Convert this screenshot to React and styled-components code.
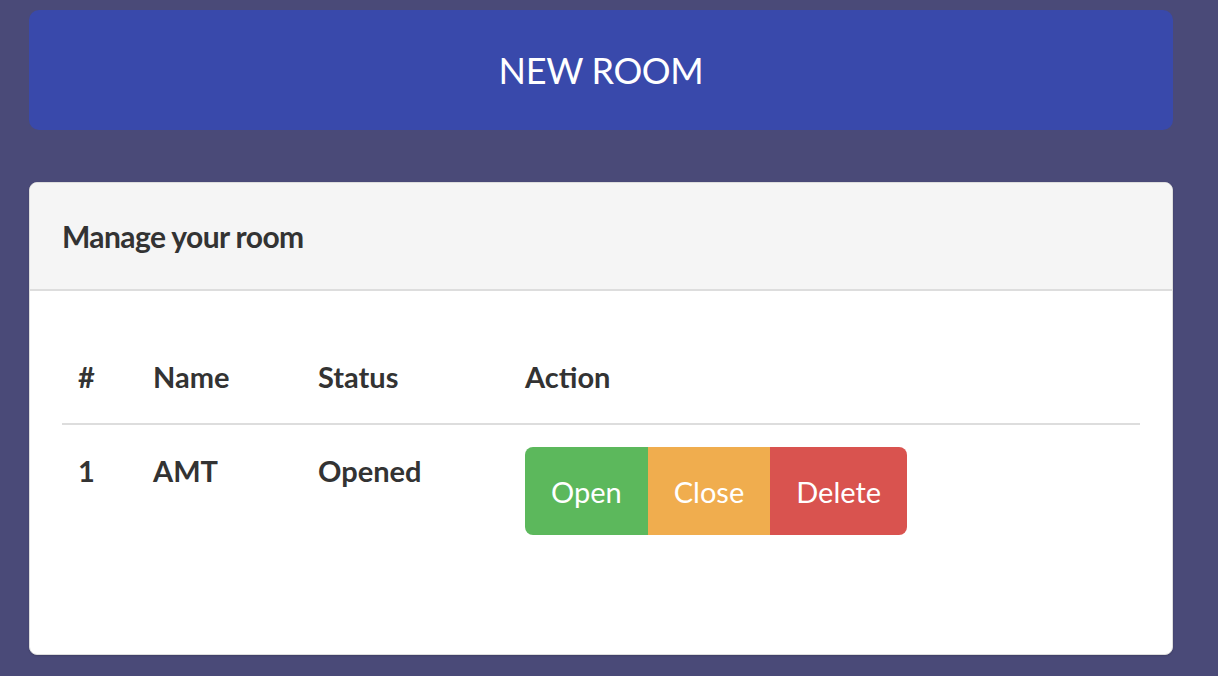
import styled, { createGlobalStyle } from "styled-components";

const GlobalStyle = createGlobalStyle`
  html, body {
    margin: 0;
    padding: 0;
    background: #4a4a78;
    font-family: Lato, "Liberation Sans", sans-serif;
    color: #333;
  }
`;

const Page = styled.div`
  display: flex;
  flex-direction: column;
  gap: 52px;
  padding: 10px 45px 0 29px;
  min-height: 676px;
  box-sizing: border-box;
`;

const NewRoomButton = styled.button`
  height: 120px;
  border: none;
  border-radius: 10px;
  background: #3949ab;
  color: #fff;
  font-family: inherit;
  font-size: 36px;
  font-weight: 400;
  letter-spacing: -0.01em;
  cursor: pointer;
`;

const Card = styled.div`
  background: #fff;
  border-radius: 8px;
  box-shadow: 0 1px 2px rgba(0, 0, 0, 0.15);
  overflow: hidden;
  height: 473px;
  border: 1px solid #ddd;
  box-sizing: border-box;
`;

const CardHeader = styled.div`
  height: 108px;
  box-sizing: border-box;
  display: flex;
  align-items: center;
  padding: 0 32px;
  background: #f5f5f5;
  border-bottom: 2px solid #ddd;

  h3 {
    margin: 0;
    font-size: 30px;
    font-weight: 700;
    letter-spacing: -0.02em;
    color: #333;
  }
`;

const CardBody = styled.div`
  padding: 40px 32px 0;
`;

const Table = styled.table`
  width: 100%;
  border-collapse: collapse;
  font-size: 29px;
  font-weight: 700;

  th, td {
    text-align: left;
    vertical-align: top;
    padding: 22px 16px;
    line-height: 48px;
  }

  thead th {
    border-bottom: 2px solid #ddd;
  }
`;

const Col = styled.col`
  width: ${(p) => p.$w || "auto"};
`;

const ButtonGroup = styled.div`
  display: inline-flex;
`;

const tones = {
  success: "#5cb85c",
  warning: "#f0ad4e",
  danger: "#d9534f",
};

const ActionButton = styled.button`
  height: 88px;
  padding: 0 26px;
  border: none;
  background: ${(p) => tones[p.$tone]};
  color: #fff;
  font-family: inherit;
  font-size: 29px;
  font-weight: 400;
  cursor: pointer;

  &:first-child {
    border-radius: 8px 0 0 8px;
  }
  &:last-child {
    border-radius: 0 8px 8px 0;
  }
`;

const rooms = [{ id: 1, name: "AMT", status: "Opened" }];

export default function App() {
  return (
    <>
      <GlobalStyle />
      <Page>
        <NewRoomButton>NEW ROOM</NewRoomButton>
        <Card>
          <CardHeader>
            <h3>Manage your room</h3>
          </CardHeader>
          <CardBody>
            <Table>
              <colgroup>
                <Col $w="75px" />
                <Col $w="165px" />
                <Col $w="207px" />
                <Col />
              </colgroup>
              <thead>
                <tr>
                  <th>#</th>
                  <th>Name</th>
                  <th>Status</th>
                  <th>Action</th>
                </tr>
              </thead>
              <tbody>
                {rooms.map((r) => (
                  <tr key={r.id}>
                    <td>{r.id}</td>
                    <td>{r.name}</td>
                    <td>{r.status}</td>
                    <td>
                      <ButtonGroup>
                        <ActionButton $tone="success">Open</ActionButton>
                        <ActionButton $tone="warning">Close</ActionButton>
                        <ActionButton $tone="danger">Delete</ActionButton>
                      </ButtonGroup>
                    </td>
                  </tr>
                ))}
              </tbody>
            </Table>
          </CardBody>
        </Card>
      </Page>
    </>
  );
}
